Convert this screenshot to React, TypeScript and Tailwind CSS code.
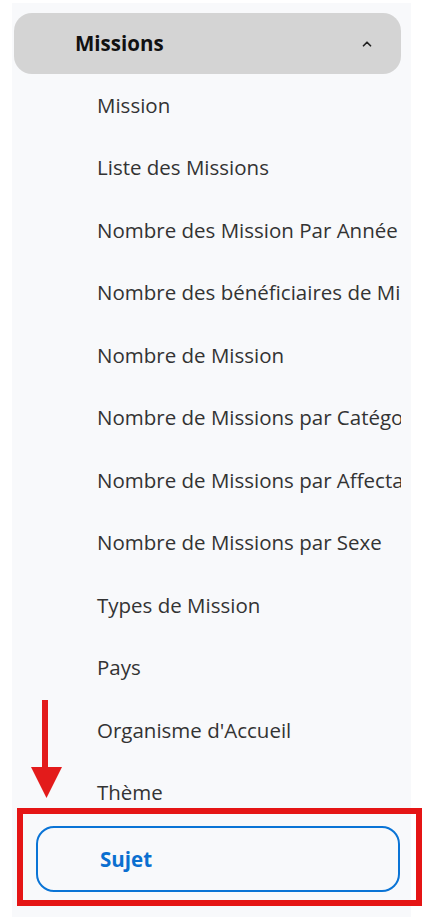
import { ChevronUp } from "lucide-react";

const items = [
  "Mission",
  "Liste des Missions",
  "Nombre des Mission Par Année",
  "Nombre des bénéficiaires de Mission",
  "Nombre de Mission",
  "Nombre de Missions par Catégorie",
  "Nombre de Missions par Affectation",
  "Nombre de Missions par Sexe",
  "Types de Mission",
  "Pays",
  "Organisme d'Accueil",
  "Thème",
];

export default function App() {
  return (
    <div
      className="relative flex h-[917px] w-[428px] overflow-hidden bg-white"
      style={{ fontFamily: '"Open Sans", "Noto Sans", sans-serif' }}
    >
      <div className="ml-3 mt-[3px] flex w-[399px] flex-col bg-[#f8f9fb] pt-[10px]">
        {/* en-tête du groupe */}
        <div className="ml-[2px] flex h-[61px] w-[387px] items-center justify-between rounded-[18px] bg-[#d4d4d4] pl-[61px] pr-[27px]">
          <span className="text-[20.5px] font-bold text-[#111]">Missions</span>
          <ChevronUp className="h-[14px] w-[14px] text-[#222]" strokeWidth={3} />
        </div>

        {/* sous-menu */}
        {items.map((label) => (
          <div
            key={label}
            className="mr-[10px] flex h-[62.5px] items-center overflow-hidden whitespace-nowrap pl-[85px] text-[20.5px] text-[#333]"
          >
            {label}
          </div>
        ))}

        <div className="ml-6 mr-[11px] mt-[2px] flex h-[66px] items-center rounded-[18px] border-2 border-[#0a74d6] pl-[62px]">
          <span className="text-[20.5px] font-bold text-[#0a6fd0]">Sujet</span>
        </div>
      </div>

      {/* annotations */}
      <svg className="absolute left-[30px] top-[700px]" width="34" height="99" viewBox="0 0 34 99">
        <rect x="12" y="0" width="6" height="70" fill="#e31b1b" />
        <polygon points="1,67 32,67 16.5,98" fill="#e31b1b" />
      </svg>
      <div className="absolute left-[17px] top-[808px] h-[98px] w-[405px] border-[6px] border-[#e51515]" />
    </div>
  );
}
